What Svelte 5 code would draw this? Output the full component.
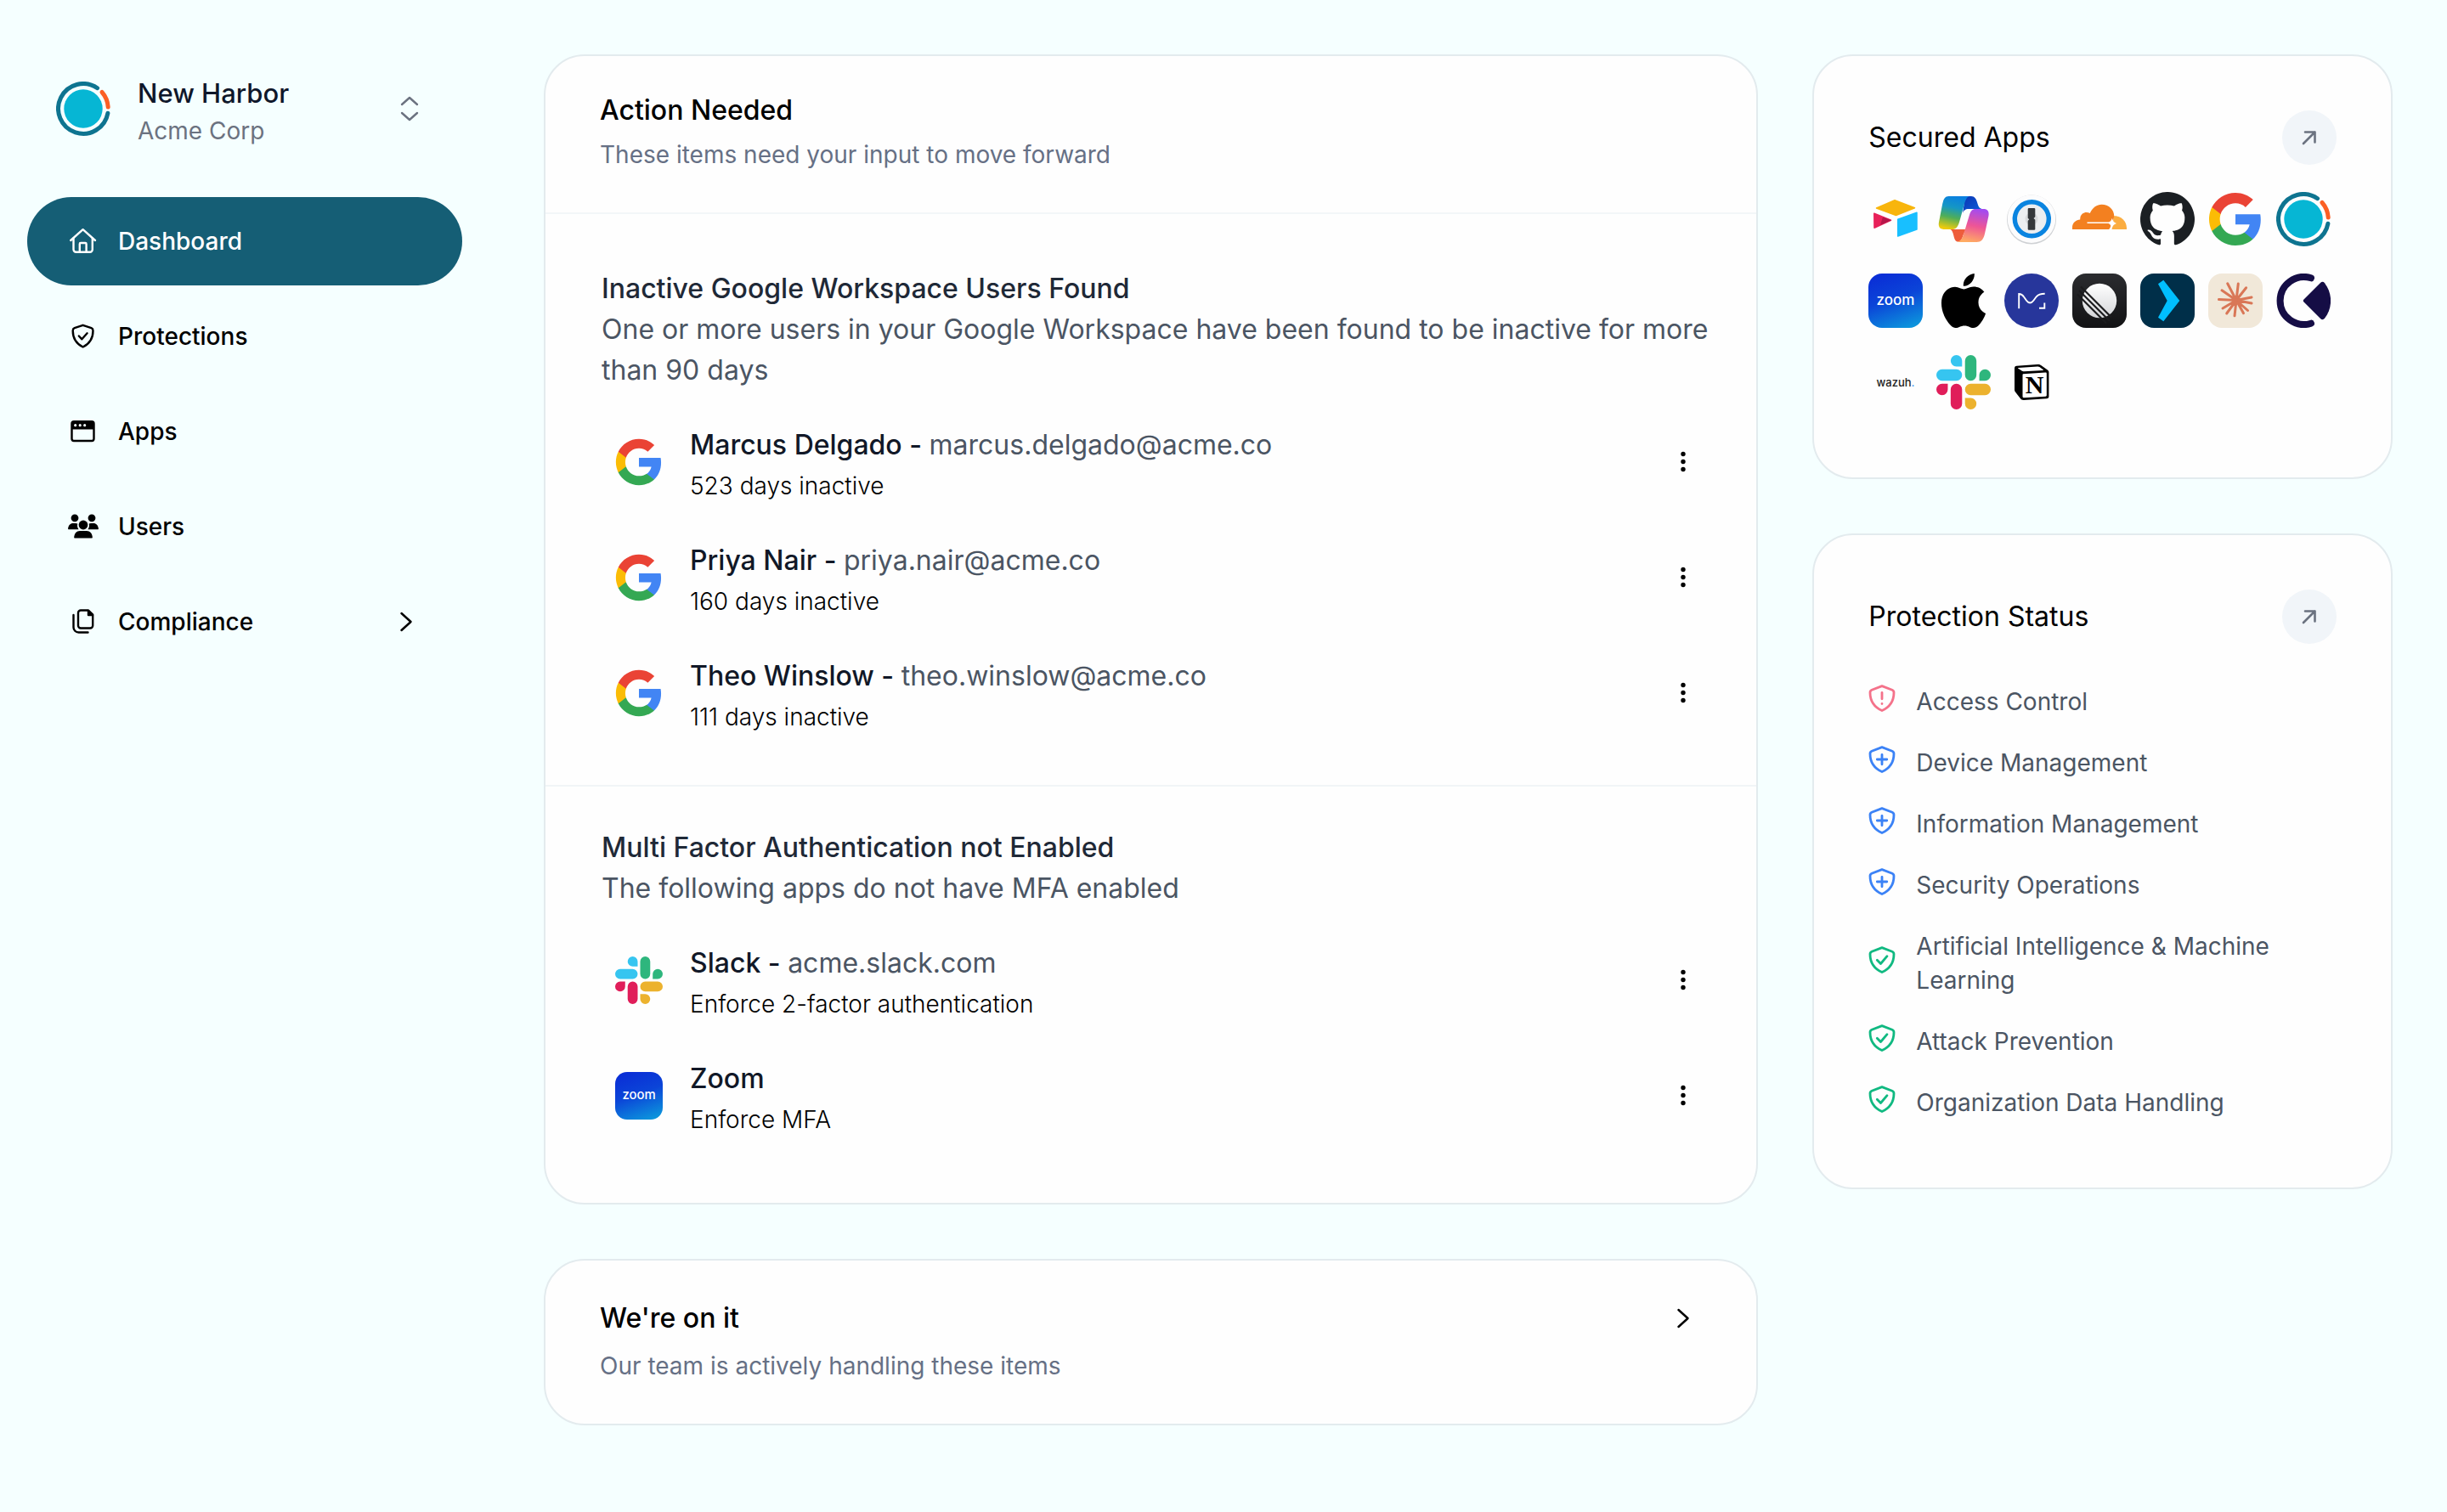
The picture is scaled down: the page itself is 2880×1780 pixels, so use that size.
<script lang="ts">
	type Item = { app: string; name: string; detail?: string; note: string };

	const navItems = [
		{ icon: 'home', label: 'Dashboard', active: true },
		{ icon: 'shield', label: 'Protections' },
		{ icon: 'window', label: 'Apps' },
		{ icon: 'users', label: 'Users' },
		{ icon: 'docs', label: 'Compliance', children: true }
	];

	const sections: { title: string; description: string; items: Item[] }[] = [
		{
			title: 'Inactive Google Workspace Users Found',
			description:
				'One or more users in your Google Workspace have been found to be inactive for more than 90 days',
			items: [
				{
					app: 'google',
					name: 'Marcus Delgado',
					detail: 'marcus.delgado@acme.co',
					note: '523 days inactive'
				},
				{
					app: 'google',
					name: 'Priya Nair',
					detail: 'priya.nair@acme.co',
					note: '160 days inactive'
				},
				{
					app: 'google',
					name: 'Theo Winslow',
					detail: 'theo.winslow@acme.co',
					note: '111 days inactive'
				}
			]
		},
		{
			title: 'Multi Factor Authentication not Enabled',
			description: 'The following apps do not have MFA enabled',
			items: [
				{
					app: 'slack',
					name: 'Slack',
					detail: 'acme.slack.com',
					note: 'Enforce 2-factor authentication'
				},
				{ app: 'zoom', name: 'Zoom', note: 'Enforce MFA' }
			]
		}
	];

	const securedApps = [
		'airtable',
		'copilot',
		'onepassword',
		'cloudflare',
		'github',
		'google',
		'harbor',
		'zoom',
		'apple',
		'monarch',
		'linear',
		'arrow',
		'claude',
		'compass',
		'wazuh',
		'slack',
		'notion'
	];

	const protections = [
		{ label: 'Access Control', status: 'alert' },
		{ label: 'Device Management', status: 'add' },
		{ label: 'Information Management', status: 'add' },
		{ label: 'Security Operations', status: 'add' },
		{ label: 'Artificial Intelligence & Machine Learning', status: 'ok' },
		{ label: 'Attack Prevention', status: 'ok' },
		{ label: 'Organization Data Handling', status: 'ok' }
	];
</script>

{#snippet logo(name)}
	{#if name === 'google'}
		<svg class="logo" viewBox="0.65 0.65 22.7 22.7" aria-hidden="true">
			<path fill="#4285f4" d="M22.56 12.25c0-.78-.07-1.53-.2-2.25H12v4.26h5.92c-.26 1.37-1.04 2.53-2.21 3.31v2.77h3.57c2.08-1.92 3.28-4.74 3.28-8.09z" />
			<path fill="#34a853" d="M12 23c2.97 0 5.46-.98 7.28-2.66l-3.57-2.77c-.98.66-2.23 1.06-3.71 1.06-2.86 0-5.29-1.93-6.16-4.53H2.18v2.84C3.99 20.53 7.7 23 12 23z" />
			<path fill="#fbbc05" d="M5.84 14.09c-.22-.66-.35-1.36-.35-2.09s.13-1.43.35-2.09V7.07H2.18C1.43 8.55 1 10.22 1 12s.43 3.45 1.18 4.93l2.85-2.22.81-.62z" />
			<path fill="#ea4335" d="M12 5.38c1.62 0 3.06.56 4.21 1.64l3.15-3.15C17.45 2.09 14.97 1 12 1 7.7 1 3.99 3.47 2.18 7.07l3.66 2.84c.87-2.6 3.3-4.53 6.16-4.53z" />
		</svg>
	{:else if name === 'slack'}
		<svg class="logo" viewBox="0 0 24 24" aria-hidden="true">
			<path fill="#e01e5a" d="M5.042 15.165a2.528 2.528 0 0 1-2.52 2.523A2.528 2.528 0 0 1 0 15.165a2.527 2.527 0 0 1 2.522-2.52h2.52v2.52zM6.313 15.165a2.527 2.527 0 0 1 2.521-2.52 2.527 2.527 0 0 1 2.521 2.52v6.313A2.528 2.528 0 0 1 8.834 24a2.528 2.528 0 0 1-2.521-2.522v-6.313z" />
			<path fill="#36c5f0" d="M8.834 5.042a2.528 2.528 0 0 1-2.521-2.52A2.528 2.528 0 0 1 8.834 0a2.528 2.528 0 0 1 2.521 2.522v2.52H8.834zM8.834 6.313a2.528 2.528 0 0 1 2.521 2.521 2.528 2.528 0 0 1-2.521 2.521H2.522A2.528 2.528 0 0 1 0 8.834a2.528 2.528 0 0 1 2.522-2.521h6.312z" />
			<path fill="#2eb67d" d="M18.956 8.834a2.528 2.528 0 0 1 2.522-2.521A2.528 2.528 0 0 1 24 8.834a2.528 2.528 0 0 1-2.522 2.521h-2.522V8.834zM17.688 8.834a2.528 2.528 0 0 1-2.523 2.521 2.527 2.527 0 0 1-2.52-2.521V2.522A2.527 2.527 0 0 1 15.165 0a2.528 2.528 0 0 1 2.523 2.522v6.312z" />
			<path fill="#ecb22e" d="M15.165 18.956a2.528 2.528 0 0 1 2.523 2.522A2.528 2.528 0 0 1 15.165 24a2.527 2.527 0 0 1-2.52-2.522v-2.522h2.52zM15.165 17.688a2.527 2.527 0 0 1-2.52-2.523 2.526 2.526 0 0 1 2.52-2.52h6.313A2.527 2.527 0 0 1 24 15.165a2.528 2.528 0 0 1-2.522 2.523h-6.313z" />
		</svg>
	{:else if name === 'zoom'}
		<svg class="logo" viewBox="0 0 64 64" aria-hidden="true">
			<defs>
				<linearGradient id="zoom-bg" x1="0.35" y1="0" x2="0.7" y2="1">
					<stop offset="0" stop-color="#0a2fd6" />
					<stop offset="0.45" stop-color="#0b45d8" />
					<stop offset="1" stop-color="#0c93dc" />
				</linearGradient>
			</defs>
			<rect width="64" height="64" rx="16" fill="url(#zoom-bg)" />
			<text class="zoom-word" x="32" y="37" text-anchor="middle">zoom</text>
		</svg>
	{:else if name === 'harbor'}
		<svg class="logo" viewBox="0 0 64 64" fill="none" stroke-width="5" stroke-linecap="round" aria-hidden="true">
			<circle cx="32" cy="32" r="22.7" fill="#06b6d4" />
			<path stroke="#0e7490" d="M60.9 37.2A29.4 29.4 0 1 1 48.6 7.7" />
			<path stroke="#fb5f24" d="M54 12.5A29.4 29.4 0 0 1 61.2 30" />
		</svg>
	{:else if name === 'airtable'}
		<svg class="logo" viewBox="0 0 64 64" stroke-linejoin="round" stroke-width="1.5" aria-hidden="true">
			<path fill="#f8b50c" stroke="#f8b50c" d="M9.5 19 31 9.8 54.5 18.8 32.5 27.5z" />
			<path fill="#e8215a" stroke="#e8215a" d="M6.8 25.2 26.5 33.2 7 42.2z" />
			<path fill="#b5174a" d="M17 29.5 27 33.2 14 39z" />
			<path fill="#18bfff" stroke="#18bfff" d="M34.7 32.2 57 24.3V44L34.7 52z" />
		</svg>
	{:else if name === 'copilot'}
		<svg class="logo" viewBox="0 0 64 64" aria-hidden="true">
			<defs>
				<linearGradient id="copilot-left" x1="0.6" y1="0" x2="0.4" y2="1">
					<stop offset="0" stop-color="#0a7fe0" />
					<stop offset="0.35" stop-color="#1597c4" />
					<stop offset="0.65" stop-color="#4fae58" />
					<stop offset="1" stop-color="#efcb0c" />
				</linearGradient>
				<linearGradient id="copilot-right" x1="0.6" y1="0" x2="0.4" y2="1">
					<stop offset="0" stop-color="#a34bf0" />
					<stop offset="0.5" stop-color="#ee5596" />
					<stop offset="1" stop-color="#ffac62" />
				</linearGradient>
				<linearGradient id="copilot-fold" x1="0" y1="0" x2="1" y2="1">
					<stop offset="0" stop-color="#0b34b4" />
					<stop offset="1" stop-color="#0c63dc" />
				</linearGradient>
			</defs>
			<path fill="url(#copilot-fold)" d="M34 5h7c4 0 6 3 7.3 8 1.2 4.5 2.7 7 6.7 7H38c-4 0-6 2-7 5z" />
			<path fill="#ee5d3c" d="M16 44h18.500l-3 7c-1.200 4.500-3 7.500-6 7.500s-4-2.500-5-6.500c-1-4.500-2-7-4-8z" />
			<path fill="url(#copilot-left)" d="M14.5 5H39c-3 .8-4.800 4.500-6 9l-6 21.500C25 42 22.500 44 18.500 44H9c-5 0-7-3-6-8.500L7.200 14C8.500 8 10.500 5 14.500 5z" />
			<path fill="url(#copilot-right)" d="M46 20h9c5.500 0 7.500 3 6.300 9L57 49c-1.500 7-4.500 10-9.500 10H24c4-.6 6.500-4 8-9l6.800-22.500c1.600-5.300 3.600-7.500 7.200-7.500z" />
		</svg>
	{:else if name === 'onepassword'}
		<svg class="logo" viewBox="0 0 64 64" aria-hidden="true">
			<circle cx="32" cy="32.5" r="29" fill="#cfd1d4" />
			<circle cx="32" cy="31.7" r="28.3" fill="#fcfcfd" />
			<circle cx="32.3" cy="31.7" r="20" fill="#eceef0" stroke="#0a84e0" stroke-width="5.4" />
			<circle cx="32" cy="31.7" r="7.5" fill="#d9dbdd" />
			<path fill="#35383b" d="M28.5 19h7l.8.8v9.500l-1.800 1.700 1.800 1.700v11.200l-.8.8h-7l-.8-.8V34l1.600-1.700-1.600-1.600V19.800z" />
		</svg>
	{:else if name === 'cloudflare'}
		<svg class="logo" viewBox="0 0 64 64" aria-hidden="true">
			<path fill="#fbad41" d="M49 28.3C58 28 64.500 35 64 44H46.500z" />
			<path fill="#f38020" d="M0 44c-.8-7 3.500-11.300 9.200-11.600C9 25.500 15 22.300 20.800 25 24 18 29 14.700 34.500 14.700c8.500 0 14.700 6.300 14.700 13.300 0 3-1.200 5.200-2.200 7.500L44.500 42c-.5 1.500-1.200 2-2.500 2z" />
			<path fill="#fff" d="M17.500 35.400h25c2.500 0 3.500-2.400 4.300-4.400.8 3 2.200 5 5.200 6-3 1-4.800 3-5.500 6.500-.7-3.600-2-5.900-4-6.400h-25z" />
		</svg>
	{:else if name === 'github'}
		<svg class="logo" viewBox="0 0.3 24 24" fill="#1b1f23" aria-hidden="true">
			<path d="M12 .297c-6.63 0-12 5.373-12 12 0 5.303 3.438 9.8 8.205 11.385.6.113.82-.258.82-.577 0-.285-.01-1.04-.015-2.04-3.338.724-4.042-1.61-4.042-1.61C4.422 18.07 3.633 17.7 3.633 17.7c-1.087-.744.084-.729.084-.729 1.205.084 1.838 1.236 1.838 1.236 1.07 1.835 2.809 1.305 3.495.998.108-.776.417-1.305.76-1.605-2.665-.3-5.466-1.332-5.466-5.93 0-1.31.465-2.38 1.235-3.22-.135-.303-.54-1.523.105-3.176 0 0 1.005-.322 3.3 1.23.96-.267 1.98-.399 3-.405 1.02.006 2.04.138 3 .405 2.28-1.552 3.285-1.23 3.285-1.23.645 1.653.24 2.873.12 3.176.765.84 1.23 1.91 1.23 3.22 0 4.61-2.805 5.625-5.475 5.92.42.36.81 1.096.81 2.22 0 1.606-.015 2.896-.015 3.286 0 .315.21.69.825.57C20.565 22.092 24 17.592 24 12.297c0-6.627-5.373-12-12-12" />
		</svg>
	{:else if name === 'apple'}
		<svg class="logo" viewBox="0 0 814 1000" aria-hidden="true">
			<path d="M788.1 340.9c-5.8 4.5-108.2 62.2-108.2 190.5 0 148.4 130.3 200.9 134.2 202.2-.6 3.2-20.7 71.9-68.7 141.9-42.8 61.6-87.5 123.1-155.5 123.1s-85.5-39.5-164-39.5c-76.5 0-103.7 40.8-165.9 40.8s-105.6-57-155.5-127C46.7 790.7 0 663 0 541.8c0-194.4 126.4-297.5 250.8-297.5 66.1 0 121.2 43.4 162.7 43.4 39.5 0 101.1-46 176.3-46 28.5 0 130.9 2.6 198.3 99.2zm-234-181.5c31.1-36.9 53.1-88.1 53.1-139.3 0-7.1-.6-14.3-1.9-20.1-50.6 1.9-110.8 33.7-147.1 75.8-28.5 32.4-55.1 83.6-55.1 135.5 0 7.8 1.3 15.6 1.9 18.1 3.2.6 8.4 1.3 13.6 1.3 45.4 0 102.5-30.4 135.5-71.3z" />
		</svg>
	{:else if name === 'monarch'}
		<svg class="logo" viewBox="0 0 64 64" fill="none" aria-hidden="true">
			<circle cx="32" cy="32" r="32" fill="#27369b" />
			<path stroke="#fff" stroke-width="1.9" d="M17.200 41.300V24c2.300 0 4.300 1.300 6 3.800l3 4.200c2.500 3.400 5.500 3.400 8 0l3.500-4.700c2-2.500 5-3.600 10-3.600M47.300 34.500v6.200H41" />
		</svg>
	{:else if name === 'linear'}
		<svg class="logo" viewBox="0 0 64 64" aria-hidden="true">
			<defs>
				<linearGradient id="linear-bg" x1="0" y1="0" x2="0" y2="1">
					<stop offset="0" stop-color="#2b2c2f" />
					<stop offset="1" stop-color="#121214" />
				</linearGradient>
				<linearGradient id="linear-disc" x1="0" y1="0" x2="0" y2="1">
					<stop offset="0" stop-color="#fff" />
					<stop offset="1" stop-color="#d4d5d8" />
				</linearGradient>
			</defs>
			<rect width="64" height="64" rx="16" fill="url(#linear-bg)" />
			<circle cx="32" cy="32" r="20.2" fill="url(#linear-disc)" />
			<path stroke="#1b1b1d" stroke-width="2.2" d="M10 15.5 46 51.500M8 20 44 56M6 24.500 40 58.500" />
		</svg>
	{:else if name === 'arrow'}
		<svg class="logo" viewBox="0 0 64 64" aria-hidden="true">
			<rect width="64" height="64" rx="16" fill="#002f49" />
			<path fill="#00bfff" d="M21 12.300 27.300 7.700 46.300 32 27.300 56.300 21 51.700 31.700 32z" />
		</svg>
	{:else if name === 'claude'}
		<svg class="logo" viewBox="0 0 64 64" aria-hidden="true">
			<rect width="64" height="64" rx="16" fill="#f1e8d9" />
			<g stroke="#d97757" stroke-width="3" stroke-linecap="round">
				<path d="M33 31.5 22.700 11.800M33 31.500 35.300 12M33 31.500 44.600 16.800M33 31.500 51 28M33 31.500 51 35M33 31.500 46.500 43.500M33 31.500 41.500 46.800M33 31.500 31 49.800M33 31.500 21.700 47M33 31.500 17 41M33 31.500 12.500 30.500M33 31.500 16 19.800" />
				<circle cx="33" cy="31.5" r="3.5" fill="#d97757" />
			</g>
		</svg>
	{:else if name === 'compass'}
		<svg class="logo" viewBox="0 0 64 64" aria-hidden="true">
			<path fill="none" stroke="#150d45" stroke-width="8" stroke-linecap="round" d="M41 5.300A28 28 0 1 0 41 58.700" />
			<path fill="#150d45" d="M32.500 30.500 52 11c1.700-1.700 3.600-1.600 5 .2 9.500 12.300 9.500 29.300 0 41.600-1.400 1.800-3.300 1.900-5 .2L32.500 33.500c-1-1-1-2 0-3z" />
		</svg>
	{:else if name === 'wazuh'}
		<svg class="logo" viewBox="0 0 64 64" aria-hidden="true">
			<text class="wazuh-word" x="32" y="37" text-anchor="middle">wazuh<tspan fill="#2f8ff0">.</tspan></text>
		</svg>
	{:else if name === 'notion'}
		<svg class="logo" viewBox="0 0 64 64" aria-hidden="true">
			<path d="M14.500 12.700 39 11c2-.1 3 .1 4.500 1.200l7.300 5.200c1.200.9 1.600 1.600 1.600 3v28c0 1.700-.7 2.700-2.700 2.800L23 52.900c-2 .1-3-.3-4-1.700l-6-7.800c-.8-1.100-1-2-1-3.200V15.500c0-1.500.8-2.700 2.500-2.800z" />
			<path fill="#fff" d="M16.500 14.900 39 13.400c1-.1 1.600.1 2.400.7l4.300 3.100c.5.400.3.600-.2.700l-22.500 1.400c-1 .1-1.700-.1-2.500-.7l-4.200-2.900c-.4-.4-.3-.7.2-.8zM22 22.200l26.500-1.600c.9 0 1.300.4 1.300 1.200v25.400c0 .9-.4 1.400-1.300 1.500L23 50.200c-.9.1-1.500-.4-1.500-1.400V23.500c0-.8.2-1.200.5-1.300z" />
			<text class="notion-letter" x="35.5" y="45" text-anchor="middle">N</text>
		</svg>
	{/if}
{/snippet}

{#snippet navIcon(name)}
	<svg class="nav-icon" viewBox="0 0 36 36" fill="none" stroke="currentColor" stroke-width="2.4" stroke-linecap="round" stroke-linejoin="round" aria-hidden="true">
		{#if name === 'home'}
			<path d="M3.2 17 17.6 4.2 32 17" />
			<path d="M6.5 14.5v13.3a3 3 0 0 0 3 3h16.3a3 3 0 0 0 3-3V14.5" />
			<path d="M13.8 30.5v-9.3a1.2 1.2 0 0 1 1.2-1.2h5.4a1.2 1.2 0 0 1 1.2 1.2v9.3" />
		{:else if name === 'shield'}
			<path d="M17.6 4.8 27.5 8.2q2 .8 2 3c0 9-3.8 15.3-11.9 19.3C9.5 26.5 5.7 20.2 5.7 11.2q0-2.2 2-3z" />
			<path d="m12.8 17.5 3.6 3.8 6.2-7" />
		{:else if name === 'window'}
			<rect x="4.5" y="6.2" width="26" height="22.8" rx="2.5" />
			<path fill="currentColor" stroke="none" d="M4.5 6.2h26v9.3h-26z" />
			<path stroke="#f5ffff" stroke-width="3.2" d="M8.7 10.7h0M14.2 10.7h0M19.7 10.7h0" />
		{:else if name === 'users'}
			<g fill="currentColor" stroke="none">
				<circle cx="8" cy="7.8" r="4.4" />
				<circle cx="28" cy="7.8" r="4.4" />
				<path d="M1 21.2c-.7 0-1-.4-.9-1 .4-3.8 2.7-6.2 5.900-6.200h3c.8 0 1.600.2 2.300.5-.7 2.500-.2 4.900 1.300 6.700zM35 21.200c.7 0 1-.4.9-1-.4-3.800-2.700-6.200-5.900-6.200h-3c-.8 0-1.600.2-2.300.5.7 2.500.2 4.900-1.300 6.700z" />
				<circle cx="18" cy="16" r="5.4" />
				<path d="M8.2 31.5c-.7 0-1-.4-1-1 .2-4.500 2.900-7.500 6.800-7.500h8c3.900 0 6.600 3 6.800 7.500 0 .6-.3 1-1 1z" />
			</g>
		{:else}
			<path d="M12 7.5a3 3 0 0 1 3-3h9l5.200 5.200V22.500a3 3 0 0 1-3 3H15a3 3 0 0 1-3-3z" />
			<path fill="currentColor" d="M24 5v5h5z" />
			<path d="M6.500 10v14.500a6 6 0 0 0 6 6h11" />
		{/if}
	</svg>
{/snippet}

{#snippet chevron()}
	<svg class="chevron" viewBox="0 0 36 36" aria-hidden="true">
		<path d="m12.500 8 11 10-11 10" />
	</svg>
{/snippet}

{#snippet openLink(label)}
	<a class="open-link" href="#open" aria-label={label}>
		<svg viewBox="0 0 24 24" aria-hidden="true">
			<path d="M5 19 18.500 5.500M7 5.500h11.500V17.500" />
		</svg>
	</a>
{/snippet}

<div class="app">
	<aside class="sidebar">
		<button class="workspace" type="button">
			<span class="workspace-logo">{@render logo('harbor')}</span>
			<span class="workspace-text">
				<span class="workspace-name">New Harbor</span>
				<span class="workspace-org">Acme Corp</span>
			</span>
			<svg class="switch-icon" viewBox="0 0 32 32" aria-hidden="true">
				<path d="m7 11 9-8 9 8M7 21l9 8 9-8" />
			</svg>
		</button>

		<nav>
			{#each navItems as item}
				<a class="nav-link" class:active={item.active} href="#{item.icon}">
					{@render navIcon(item.icon)}
					<span class="nav-label">{item.label}</span>
					{#if item.children}
						{@render chevron()}
					{/if}
				</a>
			{/each}
		</nav>
	</aside>

	<main>
		<div class="column wide">
			<section class="card">
				<header class="card-header">
					<h2>Action Needed</h2>
					<p>These items need your input to move forward</p>
				</header>
				{#each sections as section}
					<div class="issue">
						<h3>{section.title}</h3>
						<p class="issue-text">{section.description}</p>
						<ul class="issue-items">
							{#each section.items as item}
								<li>
									<span class="item-logo">{@render logo(item.app)}</span>
									<div class="item-text">
										<div class="item-name">
											{item.name}{#if item.detail}{' - '}<span class="item-detail">{item.detail}</span>{/if}
										</div>
										<div class="item-note">{item.note}</div>
									</div>
									<button class="menu-button" type="button" aria-label="Options for {item.name}">
										<svg viewBox="0 0 32 32" aria-hidden="true">
											<circle cx="16" cy="6.5" r="2.7" />
											<circle cx="16" cy="15.5" r="2.7" />
											<circle cx="16" cy="24.5" r="2.7" />
										</svg>
									</button>
								</li>
							{/each}
						</ul>
					</div>
				{/each}
			</section>

			<section class="card progress">
				<button class="progress-toggle" type="button">
					<span class="progress-title">We're on it</span>
					{@render chevron()}
				</button>
				<p>Our team is actively handling these items</p>
			</section>
		</div>

		<div class="column">
			<section class="card side-card">
				<header class="side-header">
					<h2>Secured Apps</h2>
					{@render openLink('Open secured apps')}
				</header>
				<div class="app-grid">
					{#each securedApps as app}
						<span class="app-logo">{@render logo(app)}</span>
					{/each}
				</div>
			</section>

			<section class="card side-card">
				<header class="side-header">
					<h2>Protection Status</h2>
					{@render openLink('Open protection status')}
				</header>
				<ul class="status-list">
					{#each protections as item}
						<li>
							<svg class="status-icon {item.status}" viewBox="0 0 32 32" aria-hidden="true">
								<path d="M16 1.6 28 6.200q2 .8 2 3c0 9.800-4.500 17-14 21.300C6.500 26.200 2 19 2 9.200q0-2.200 2-3z" />
								{#if item.status === 'alert'}
									<path d="M16 9.300v7.500M16 22.500h0" />
								{:else if item.status === 'add'}
									<path d="M16 10.300v11.500M10.300 16h11.500" />
								{:else}
									<path d="m10.300 16.200 4.200 4.300 7.500-8.800" />
								{/if}
							</svg>
							<span>{item.label}</span>
						</li>
					{/each}
				</ul>
			</section>
		</div>
	</main>
</div>

<style>
	:global(body) {
		margin: 0;
		background: #f5ffff;
		font-family: Inter, sans-serif;
		color: #000;
	}

	h2,
	h3,
	p,
	ul {
		margin: 0;
		padding: 0;
	}

	ul {
		list-style: none;
	}

	button {
		border: 0;
		padding: 0;
		background: none;
		font: inherit;
		color: inherit;
		text-align: left;
		cursor: pointer;
	}

	a {
		color: inherit;
		text-decoration: none;
	}

	svg {
		display: block;
	}

	.app {
		display: grid;
		grid-template-columns: 576px minmax(0, 1fr);
	}

	/* sidebar */
	.sidebar {
		padding: 82px 32px 64px;
	}

	.workspace {
		display: flex;
		align-items: center;
		gap: 32px;
		width: 100%;
		padding: 0 46px 0 34px;
		margin-bottom: 58px;
	}

	.workspace-logo {
		width: 64px;
		height: 64px;
	}

	.workspace-text {
		flex: 1;
		display: flex;
		flex-direction: column;
		padding-top: 4px;
	}

	.workspace-name {
		font-size: 31px;
		line-height: 48px;
		font-weight: 500;
		color: #0f172a;
	}

	.workspace-org {
		font-size: 28px;
		line-height: 40px;
		color: #6b7280;
	}

	.switch-icon {
		width: 32px;
		height: 32px;
		fill: none;
		stroke: #6b7280;
		stroke-width: 2.4;
		stroke-linecap: round;
		stroke-linejoin: round;
	}

	nav {
		display: flex;
		flex-direction: column;
		gap: 8px;
	}

	.nav-link {
		display: flex;
		align-items: center;
		gap: 23px;
		height: 104px;
		padding: 0 48px;
		border-radius: 52px;
		font-size: 28px;
		line-height: 40px;
		font-weight: 500;
	}

	.nav-link.active {
		background: #155e75;
		color: #fff;
	}

	.nav-icon {
		width: 36px;
		height: 36px;
	}

	.nav-label {
		flex: 1;
	}

	.chevron {
		width: 36px;
		height: 36px;
		fill: none;
		stroke: currentColor;
		stroke-width: 2.5;
		stroke-linecap: round;
		stroke-linejoin: round;
	}

	/* content */
	main {
		display: grid;
		grid-template-columns: repeat(12, minmax(0, 1fr));
		gap: 64px;
		align-items: start;
		padding: 64px;
	}

	.column {
		grid-column: span 4;
		display: flex;
		flex-direction: column;
		gap: 64px;
	}

	.column.wide {
		grid-column: span 8;
	}

	.card {
		border: 2px solid #e3ebee;
		border-radius: 48px;
		background: #fefefe;
	}

	.card-header {
		padding: 40px 64px 48px;
		border-bottom: 2px solid #f3f6f8;
	}

	h2 {
		font-size: 32px;
		line-height: 48px;
		font-weight: 500;
	}

	.card-header p,
	.progress p {
		font-size: 28px;
		line-height: 40px;
		color: #667085;
	}

	.card-header p {
		margin-top: 8px;
	}

	.issue {
		padding: 64px 56px 56px 66px;
	}

	.issue + .issue {
		padding-top: 48px;
		padding-bottom: 74px;
		border-top: 2px solid #f1f5f7;
	}

	h3 {
		font-size: 32px;
		line-height: 48px;
		font-weight: 500;
		color: #1f2937;
	}

	.issue-text {
		font-size: 32px;
		line-height: 48px;
		color: #4b5563;
	}

	.issue-items {
		display: flex;
		flex-direction: column;
		gap: 32px;
		margin-top: 32px;
		padding: 0 10px 0 16px;
	}

	.issue-items li {
		display: flex;
		align-items: center;
		gap: 32px;
	}

	.item-logo {
		flex: none;
		width: 56px;
		height: 56px;
	}

	.item-text {
		flex: 1;
		padding-top: 8px;
	}

	.item-name {
		font-size: 32px;
		line-height: 48px;
		font-weight: 500;
		color: #111827;
	}

	.item-detail {
		font-weight: 400;
		color: #4b5563;
	}

	.item-note {
		font-size: 28px;
		line-height: 48px;
		font-weight: 300;
	}

	.menu-button {
		padding: 4px;
	}

	.menu-button svg {
		width: 32px;
		height: 32px;
	}

	.progress {
		padding: 44px 64px 48px;
	}

	.progress-toggle {
		display: flex;
		align-items: center;
		justify-content: space-between;
		width: 100%;
		margin-bottom: 12px;
		padding-right: 4px;
	}

	.progress-title {
		font-size: 32px;
		line-height: 48px;
		font-weight: 500;
	}

	/* right column */
	.side-card {
		padding: 64px 64px 80px;
	}

	.side-header {
		display: flex;
		align-items: center;
		justify-content: space-between;
	}

	.side-header h2 {
		font-weight: 400;
	}

	.open-link {
		display: grid;
		place-items: center;
		width: 64px;
		height: 64px;
		border-radius: 50%;
		background: #f1f5f9;
	}

	.open-link svg {
		width: 24px;
		height: 24px;
		fill: none;
		stroke: #6b7280;
		stroke-width: 2.6;
		stroke-linecap: round;
		stroke-linejoin: round;
	}

	.app-grid {
		display: flex;
		flex-wrap: wrap;
		gap: 32px 16px;
		margin-top: 32px;
	}

	.app-logo {
		width: 64px;
		height: 64px;
	}

	.logo {
		width: 100%;
		height: 100%;
	}

	.zoom-word {
		font-size: 17px;
		font-weight: 500;
		fill: #fff;
	}

	.wazuh-word {
		font-size: 13px;
		font-weight: 500;
		fill: #222;
	}

	.notion-letter {
		font-family: 'Liberation Serif', serif;
		font-size: 30px;
		font-weight: 700;
	}

	.status-list {
		display: flex;
		flex-direction: column;
		gap: 32px;
		margin-top: 48px;
	}

	.status-list li {
		display: flex;
		align-items: center;
		gap: 24px;
		font-size: 28px;
		line-height: 40px;
		color: #4b5563;
	}

	.status-icon {
		flex: none;
		width: 32px;
		height: 32px;
		margin-bottom: 8px;
		fill: none;
		stroke-width: 2.8;
		stroke-linecap: round;
		stroke-linejoin: round;
	}

	.status-icon.alert {
		stroke: #f4728a;
	}

	.status-icon.add {
		stroke: #3b82f6;
	}

	.status-icon.ok {
		stroke: #10b981;
	}
</style>
